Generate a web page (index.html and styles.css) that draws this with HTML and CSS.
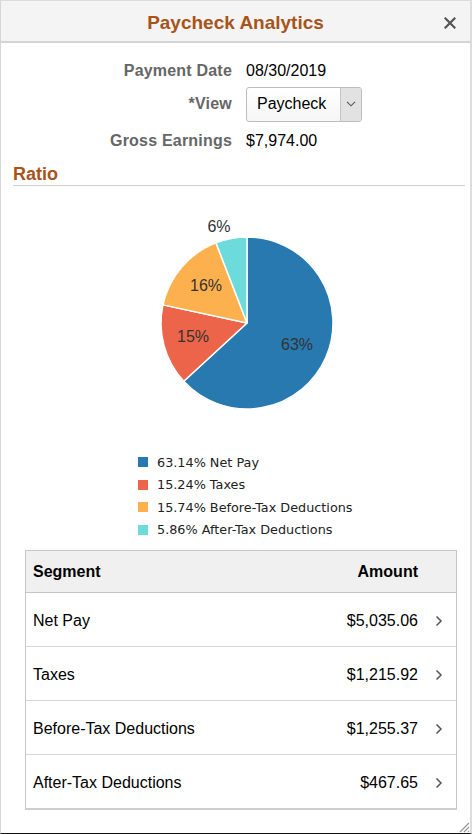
FILE: index.html
```html
<!DOCTYPE html>
<html lang="en">
<head>
<meta charset="utf-8">
<title>Paycheck Analytics</title>
<link rel="stylesheet" href="styles.css">
</head>
<body>
<div class="modal">
  <header class="modal-header">
    <h1 class="modal-title">Paycheck Analytics</h1>
    <button class="close-btn" aria-label="Close">
      <svg width="12" height="12" viewBox="0 0 12 12"><path d="M1.5 1.5L10.5 10.5M10.5 1.5L1.5 10.5" stroke="#555" stroke-width="2.2" stroke-linecap="square" fill="none"/></svg>
    </button>
  </header>

  <div class="info-grid">
    <div class="info-label row1">Payment Date</div>
    <div class="info-value row1">08/30/2019</div>
    <div class="info-label row2">*View</div>
    <div class="info-value row2">
      <div class="select">
        <span class="select-text">Paycheck</span>
        <span class="select-btn">
          <svg width="10" height="6" viewBox="0 0 10 6"><path d="M1 0.8L5 4.8L9 0.8" stroke="#555" stroke-width="1.1" fill="none"/></svg>
        </span>
      </div>
    </div>
    <div class="info-label row3">Gross Earnings</div>
    <div class="info-value row3">$7,974.00</div>
  </div>

  <h2 class="section-title">Ratio</h2>

  <svg class="pie" width="453" height="240" viewBox="0 0 453 240">
    <g stroke="#fff" stroke-width="1.5" stroke-linejoin="round">
      <path d="M234 123L234 37A86 86 0 1 1 170.78 181.31Z" fill="#2779b0"/>
      <path d="M234 123L170.78 181.31A86 86 0 0 1 149.93 104.87Z" fill="#ec654a"/>
      <path d="M234 123L149.93 104.87A86 86 0 0 1 202.94 42.8Z" fill="#fdb14e"/>
      <path d="M234 123L202.94 42.8A86 86 0 0 1 234 37Z" fill="#6ddbdb"/>
    </g>
    <g class="pie-labels" text-anchor="middle" dominant-baseline="central">
      <text x="284" y="144">63%</text>
      <text x="180" y="136">15%</text>
      <text x="193" y="85">16%</text>
      <text x="206" y="26">6%</text>
    </g>
  </svg>

  <ul class="legend">
    <li><span class="swatch sw-blue"></span>63.14% Net Pay</li>
    <li><span class="swatch sw-red"></span>15.24% Taxes</li>
    <li><span class="swatch sw-orange"></span>15.74% Before-Tax Deductions</li>
    <li><span class="swatch sw-cyan"></span>5.86% After-Tax Deductions</li>
  </ul>

  <div class="table">
    <div class="trow thead">
      <div class="cell-seg">Segment</div>
      <div class="cell-amt">Amount</div>
      <div class="cell-chev"></div>
    </div>
    <div class="trow">
      <div class="cell-seg">Net Pay</div>
      <div class="cell-amt">$5,035.06</div>
      <div class="cell-chev"><svg width="8" height="12" viewBox="0 0 8 12"><path d="M1.5 1.5L6 6L1.5 10.5" stroke="#555" stroke-width="1.5" fill="none"/></svg></div>
    </div>
    <div class="trow">
      <div class="cell-seg">Taxes</div>
      <div class="cell-amt">$1,215.92</div>
      <div class="cell-chev"><svg width="8" height="12" viewBox="0 0 8 12"><path d="M1.5 1.5L6 6L1.5 10.5" stroke="#555" stroke-width="1.5" fill="none"/></svg></div>
    </div>
    <div class="trow">
      <div class="cell-seg">Before-Tax Deductions</div>
      <div class="cell-amt">$1,255.37</div>
      <div class="cell-chev"><svg width="8" height="12" viewBox="0 0 8 12"><path d="M1.5 1.5L6 6L1.5 10.5" stroke="#555" stroke-width="1.5" fill="none"/></svg></div>
    </div>
    <div class="trow last">
      <div class="cell-seg">After-Tax Deductions</div>
      <div class="cell-amt">$467.65</div>
      <div class="cell-chev"><svg width="8" height="12" viewBox="0 0 8 12"><path d="M1.5 1.5L6 6L1.5 10.5" stroke="#555" stroke-width="1.5" fill="none"/></svg></div>
    </div>
  </div>

  <svg class="grip" width="12" height="12" viewBox="0 0 12 12">
    <path d="M11 2L2 11M11 6L6 11M11 10L10 11" stroke="#999" stroke-width="1.2" fill="none"/>
  </svg>
</div>
</body>
</html>
```

FILE: styles.css
```css
* { box-sizing: border-box; }
html, body { margin: 0; padding: 0; background: #fff; }
body {
  font-family: "Liberation Sans", Arial, sans-serif;
  color: #000;
}
.modal {
  position: relative;
  width: 472px;
  height: 834px;
  border-left: 1px solid #d6d6d6;
  border-right: 2px solid #dcdcdc;
  border-top: 1px solid #dcdcdc;
  border-bottom: 1px solid #111;
  overflow: hidden;
}
.modal-header {
  height: 42px;
  background: #f4f4f4;
  border-bottom: 2px solid #d4d4d4;
  display: flex;
  align-items: center;
  justify-content: center;
  position: relative;
  padding-top: 4px;
}
.modal-title {
  margin: 0;
  font-size: 19px;
  font-weight: bold;
  color: #a8531a;
  line-height: 24px;
}
.close-btn {
  position: absolute;
  right: 14px;
  top: 16px;
  width: 12px;
  height: 12px;
  padding: 0;
  border: 0;
  background: none;
  display: flex;
}
.info-grid {
  display: grid;
  grid-template-columns: 231px 1fr;
  column-gap: 14px;
  padding-top: 14px;
  font-size: 16px;
}
.info-label {
  text-align: right;
  font-weight: bold;
  color: #666;
  display: flex;
  align-items: center;
  justify-content: flex-end;
  letter-spacing: 0.2px;
}
.info-value {
  display: flex;
  align-items: center;
  color: #000;
}
.row1 { height: 28px; }
.row2 { height: 38px; }
.row3 { height: 36px; }
.select {
  width: 116px;
  height: 35px;
  border: 1px solid #bdbdbd;
  border-radius: 3px;
  display: flex;
  background: linear-gradient(#fff, #f6f6f6);
  overflow: hidden;
}
.select-text {
  flex: 1;
  padding-left: 10px;
  display: flex;
  align-items: center;
  font-size: 16px;
}
.select-btn {
  width: 21px;
  background: #e2e2e2;
  border-left: 1px solid #c4c4c4;
  display: flex;
  align-items: center;
  justify-content: center;
}
.section-title {
  margin: 5px 5px 0 12px;
  font-size: 18px;
  font-weight: bold;
  color: #a8531a;
  line-height: 20px;
  padding-bottom: 1px;
  border-bottom: 1px solid #cfcfcf;
}
.pie {
  display: block;
  margin: 14px 0 0 12px;
}
.pie-labels {
  font-family: "Liberation Sans", Arial, sans-serif;
  font-size: 16px;
  fill: #333;
}
.legend {
  list-style: none;
  margin: 11px 0 0 137px;
  padding: 0;
  font-family: "DejaVu Sans", Verdana, sans-serif;
  font-size: 12.8px;
  color: #222;
}
.legend li {
  height: 22.5px;
  display: flex;
  align-items: center;
}
.swatch {
  width: 10px;
  height: 10px;
  margin-right: 9px;
  flex: none;
}
.sw-blue { background: #2779b0; }
.sw-red { background: #ec654a; }
.sw-orange { background: #fdb14e; }
.sw-cyan { background: #6ddbdb; }
.table {
  margin: 9px 0 0 24px;
  width: 432px;
  border: 1px solid #c8c8c8;
  border-bottom: 2px solid #cfcfcf;
}
.trow {
  display: grid;
  grid-template-columns: 1fr auto 38px;
  align-items: center;
  height: 54px;
  border-bottom: 1px solid #d6d6d6;
  font-size: 16px;
  padding-top: 3px;
}
.trow.last { border-bottom: 0; height: 53px; }
.thead {
  height: 42px;
  background: #f0f0f0;
  font-weight: bold;
  border-bottom: 1px solid #c4c4c4;
  padding-top: 0;
}
.cell-seg { padding-left: 7px; }
.cell-amt { text-align: right; }
.cell-chev {
  display: flex;
  align-items: center;
  padding-left: 17px;
}
.grip {
  position: absolute;
  right: 0;
  bottom: 0;
}
```
